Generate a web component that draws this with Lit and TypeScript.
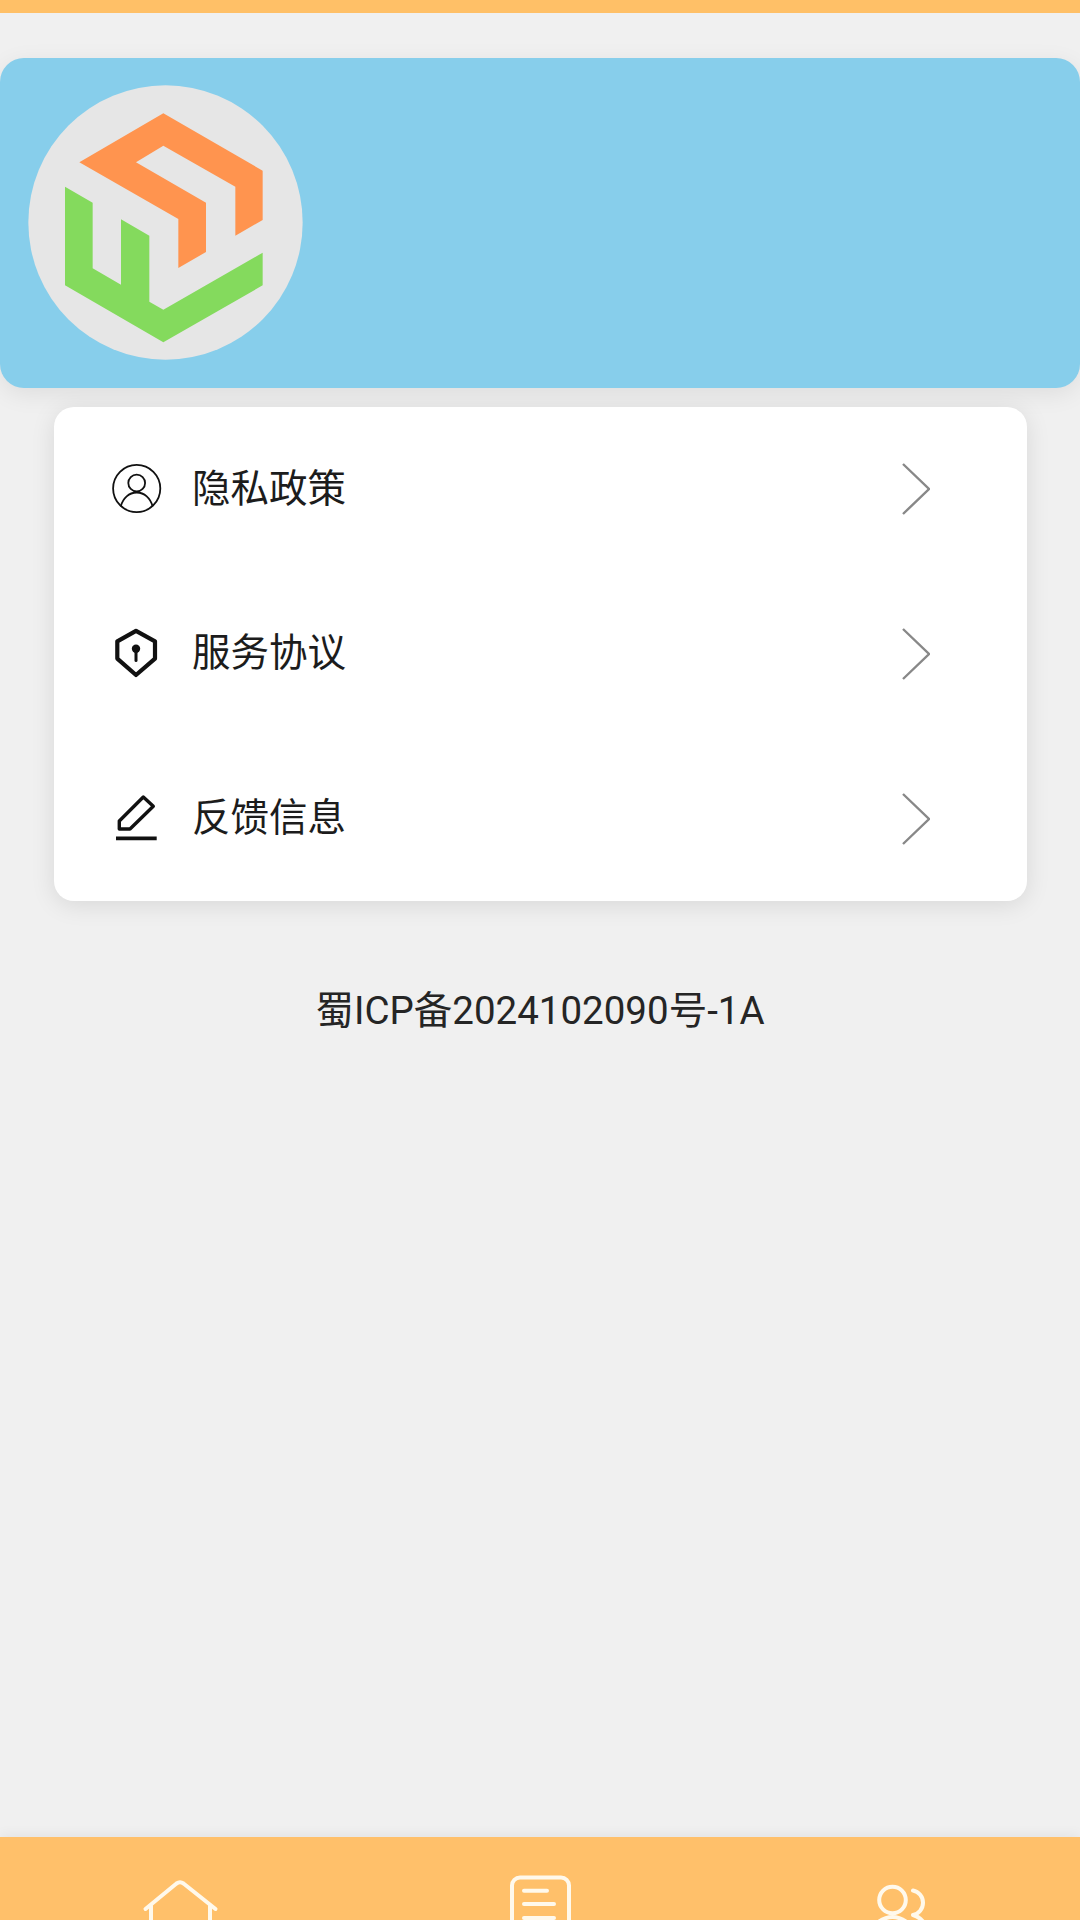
import { LitElement, html, css, svg } from "lit";
import { customElement } from "lit/decorators.js";

const menuItems = [
	{
		label: "隐私政策",
		icon: svg`
			<circle cx="36.7" cy="39.5" r="23.6" stroke-width="1.8" />
			<circle cx="36.7" cy="34" r="8.4" stroke-width="1.8" />
			<path d="M20.7 57.5C23 49 29 43.5 36.7 43.5S50.4 49 52.7 57.5" stroke-width="1.8" />`,
	},
	{
		label: "服务协议",
		icon: svg`
			<path d="M36 16.8 55 27.3V44.6L36 61 17.3 44.6V27.3Z" stroke-width="4.2" stroke-linejoin="round" />
			<circle cx="36" cy="34.8" r="4.2" fill="currentColor" stroke="none" />
			<path d="M36 36V46.5" stroke-width="3" stroke-linecap="round" />`,
	},
	{
		label: "反馈信息",
		icon: svg`
			<path d="M19.3 42 43.3 18 53.3 27.3 30 50H19.3Z" stroke-width="3.4" stroke-linejoin="round" />
			<path d="M16 59.3H56.7" stroke-width="3.8" />`,
	},
];

@customElement("app-root")
export class AppRoot extends LitElement {
	static styles = css`
		:host {
			display: flex;
			flex-direction: column;
			height: 1920px;
			overflow: hidden;
			background: #f0f0f0;
			color: #222;
			font-family: Roboto, "Noto Sans CJK SC", sans-serif;
		}

		.top-bar {
			flex: none;
			height: 13px;
			background: #ffc067;
		}

		.banner {
			flex: none;
			display: flex;
			align-items: center;
			box-sizing: border-box;
			height: 330px;
			margin-top: 45px;
			padding-left: 28px;
			padding-bottom: 2px;
			background: #87ceeb;
			border-radius: 24px;
			box-shadow: 0 6px 24px rgba(0, 0, 0, 0.08);
		}

		.logo {
			display: block;
			width: 275px;
			height: 275px;
		}

		.card {
			flex: none;
			margin: 19px 53px 0 54px;
			background: #fff;
			border-radius: 20px;
			box-shadow: 0 4px 24px rgba(0, 0, 0, 0.1);
			position: relative;
		}

		.row {
			display: flex;
			align-items: center;
			height: 164.67px;
			padding-left: 46px;
			padding-right: 97px;
			font-size: 38.5px;
			color: #1c1c1c;
		}

		.row-icon {
			flex: none;
			width: 80px;
			height: 80px;
			margin-right: 12px;
			fill: none;
			stroke: currentColor;
			color: #111;
		}

		.row-label {
			flex: 1;
			padding-bottom: 9px;
		}

		.chevron {
			flex: none;
			display: block;
			width: 28px;
			height: 52px;
			fill: none;
			stroke: #888;
			stroke-width: 2.4;
		}

		.main {
			flex: 1;
		}

		.record {
			margin-top: 85px;
			text-align: center;
			font-size: 38.5px;
			line-height: 50px;
			color: #252525;
		}

		.tab-bar {
			flex: none;
			display: grid;
			grid-template-columns: repeat(3, 1fr);
			height: 83px;
			overflow: hidden;
			background: #ffc06a;
			box-shadow: 0 -2px 12px rgba(0, 0, 0, 0.06);
		}

		.tab {
			display: flex;
			justify-content: center;
			padding-top: 33px;
		}

		.tab svg {
			flex: none;
			display: block;
			width: 80px;
			height: 80px;
			fill: none;
			stroke: #fff9ec;
			stroke-width: 4;
			stroke-linecap: round;
			stroke-linejoin: round;
		}
	`;

	render() {
		return html`
			<div class="top-bar"></div>
			<div class="banner">
				<svg class="logo" viewBox="85 255 823 825">
					<circle cx="496.5" cy="667.5" r="411.5" fill="#e6e6e6" />
					<path
						fill="#ff944f"
						d="M490 340 788 512V660L706 707V560L490 437 408 487 618 608V756L535 804V657L238 487Z"
					/>
					<path
						fill="#84da5d"
						d="M195 560 278 608V805L363 854V658L448 707V905L490 929 788 758V856L490 1027 195 856Z"
					/>
				</svg>
			</div>
			<div class="card">
				${menuItems.map(
					(item) => html`
						<div class="row">
							<svg class="row-icon" viewBox="0 0 80 80">${item.icon}</svg>
							<span class="row-label">${item.label}</span>
							<svg class="chevron" viewBox="0 0 28 52">
								<path d="M1 1 27 26 1 51" />
							</svg>
						</div>
					`
				)}
			</div>
			<div class="main">
				<div class="record">蜀ICP备2024102090号-1A</div>
			</div>
			<div class="tab-bar">
				<div class="tab">
					<svg viewBox="0 0 80 80">
						<path d="M5.5 39 36.5 13.5Q40 11 43.5 13.5L75.5 39" />
						<path d="M11 36V70M70 36V70" />
					</svg>
				</div>
				<div class="tab">
					<svg viewBox="0 0 80 80">
						<rect x="12" y="7.5" width="57" height="70" rx="8" />
						<path d="M24 20.7H47M24 34H54M24 48H54" />
					</svg>
				</div>
				<div class="tab">
					<svg viewBox="0 0 80 80">
						<circle cx="32.5" cy="30" r="13.3" />
						<path d="M53 20.5A12.5 12.5 0 0 1 53 45Q60 47 65 54" />
						<path d="M17 53Q32.5 41 48 53" />
					</svg>
				</div>
			</div>
		`;
	}
}
